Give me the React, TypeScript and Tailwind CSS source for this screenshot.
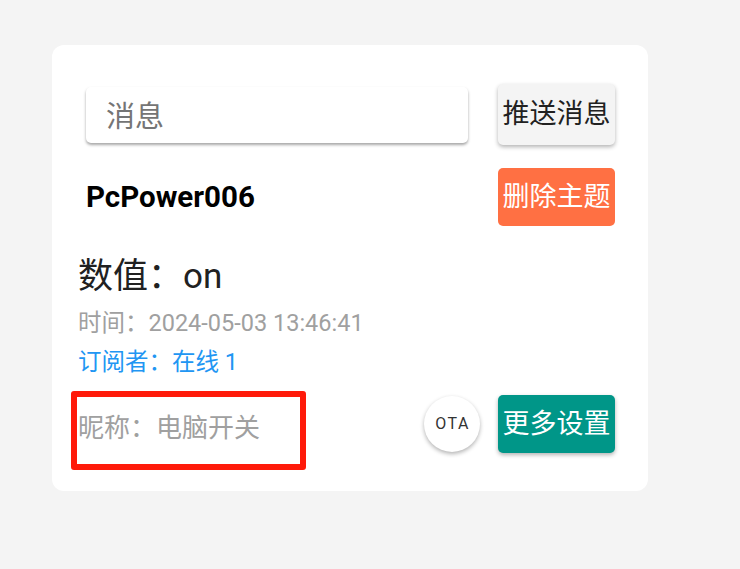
import React from "react";

const font = { fontFamily: "Roboto, 'Noto Sans CJK SC', sans-serif" };

const App = () => {
  return (
    <div
      className="w-[740px] h-[569px] bg-[#f4f4f4] pt-[45px] pl-[52px]"
      style={font}
    >
      <div className="relative w-[596px] h-[446px] bg-white rounded-[12px] pt-[39px] pl-[26px] pr-[33px]">
        {/* message row */}
        <div className="flex items-center justify-between pl-[8px]">
          <div className="w-[382px] h-[56px] rounded-[5px] bg-white shadow-[0_2px_3px_rgba(0,0,0,0.35)] flex items-center pl-[20px] pt-[7px] text-[29px] text-[#757575]">
            消息
          </div>
          <button className="w-[117px] h-[61px] rounded-[5px] bg-[#f4f4f4] shadow-[0_2px_4px_rgba(0,0,0,0.3)] text-[27px] text-[#212121] whitespace-nowrap">
            推送消息
          </button>
        </div>

        {/* topic row */}
        <div className="flex items-center justify-between pl-[8px] mt-[23px]">
          <div className="text-[29.5px] font-bold text-black">PcPower006</div>
          <button className="w-[117px] h-[58px] rounded-[5px] bg-[#ff7043] text-[27px] text-white whitespace-nowrap">
            删除主题
          </button>
        </div>

        {/* value block */}
        <div className="mt-[29px] text-[35px] leading-[44px] text-[#212121]">
          数值：on
        </div>
        <div className="mt-[9px] text-[23.5px] leading-[30px] text-[#a0a0a0]">
          时间：2024-05-03 13:46:41
        </div>
        <div className="mt-[9px] text-[23.5px] leading-[30px] text-[#2196f3]">
          订阅者：在线 1
        </div>

        {/* bottom row */}
        <div className="flex items-center mt-[18px]">
          <div className="flex-1 pt-[8px] text-[26px] text-[#a0a0a0]">昵称：电脑开关</div>
          <div className="w-[56px] h-[56px] rounded-full bg-white shadow-[0_2px_4px_rgba(0,0,0,0.3)] flex items-center justify-center pl-[1px] text-[16px] tracking-[1.5px] text-[#333333]">
            OTA
          </div>
          <button className="ml-[18px] w-[117px] h-[58px] rounded-[5px] bg-[#009688] shadow-[0_2px_4px_rgba(0,0,0,0.3)] text-[27px] text-white whitespace-nowrap">
            更多设置
          </button>
        </div>

        {/* annotation box */}
        <div className="absolute left-[19px] top-[346px] w-[235px] h-[79px] border-[6px] border-[#ff1a0a] rounded-[3px]" />
      </div>
    </div>
  );
};

export default App;
